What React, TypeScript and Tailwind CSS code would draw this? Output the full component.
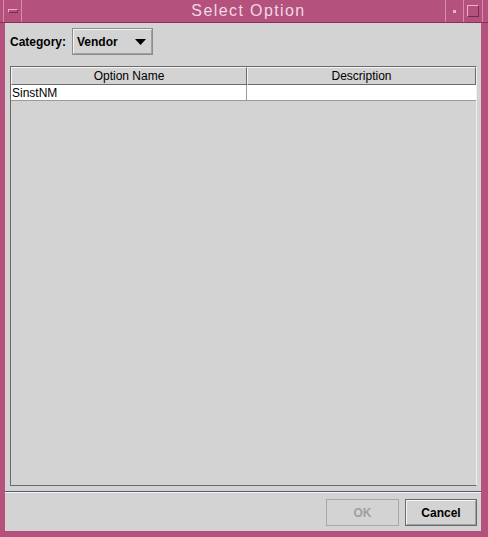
import React from "react";

export default function App() {
  const font = { fontFamily: '"Liberation Sans", Arial, sans-serif' };
  return (
    <div style={font} className="w-[488px] h-[537px] bg-[#b4517c] flex flex-col relative overflow-hidden">
      {/* title bar */}
      <div className="h-[23px] flex border-b border-[#8a3058]">
        <div className="w-[4px] border-r border-[#d98aab]" />
        <div className="w-[18px] flex items-center justify-center border-r border-[#d98aab]">
          <div className="w-[10px] h-[4px] border border-t-[#e6b3c8] border-l-[#e6b3c8] border-b-[#7a2a4c] border-r-[#7a2a4c]" />
        </div>
        <div className="flex-1 flex items-center justify-center pl-[30px] text-[16px] text-[#f0d8e4] tracking-[1.4px]">
          Select Option
        </div>
        <div className="w-[19px] flex items-center justify-center border-l border-[#d98aab] border-r border-r-[#d98aab]">
          <div className="w-[3px] h-[3px] bg-[#e6b3c8]" />
        </div>
        <div className="w-[18px] flex items-center justify-center">
          <div className="w-[12px] h-[12px] border border-t-[#e6b3c8] border-l-[#e6b3c8] border-b-[#7a2a4c] border-r-[#7a2a4c]" />
        </div>
        <div className="w-[6px] border-l border-[#d98aab]" />
      </div>

      <div className="flex-1 flex pl-[5px] pr-[7px] pb-[6px]">
        <div className="flex-1 bg-[#d3d3d3] flex flex-col">
          {/* category row */}
          <div className="flex items-center mt-[5px] ml-[5px] h-[27px]">
            <span className="text-[12px] font-bold text-black">Category:</span>
            <div className="ml-[6px] w-[81px] h-[27px] border border-[#8c8c8c] bg-[#d3d3d3] flex items-center">
              <div className="w-full h-full border border-t-[#f4f4f4] border-l-[#f4f4f4] border-b-[#a0a0a0] border-r-[#a0a0a0] flex items-center pl-[3px] pr-[4px]">
                <span className="text-[12px] font-bold text-black flex-1">Vendor</span>
                <svg width="11" height="6" viewBox="0 0 11 6" className="mr-[1px]">
                  <polygon points="0,0 11,0 5.5,6" fill="#000" />
                </svg>
              </div>
            </div>
          </div>

          {/* table */}
          <div className="mt-[11px] ml-[5px] mr-[4px] h-[420px] border border-t-[#6a6a6a] border-l-[#6a6a6a] border-b-[#6a6a6a] border-r-[#f0f0f0] bg-[#d3d3d3] flex flex-col">
            <div className="flex h-[18px]">
              <div className="w-[236px] border border-t-[#f4f4f4] border-l-[#f4f4f4] border-b-[#6a6a6a] border-r-[#6a6a6a] flex items-center justify-center text-[12px] text-black">
                Option Name
              </div>
              <div className="flex-1 border border-t-[#f4f4f4] border-l-[#f4f4f4] border-b-[#6a6a6a] border-r-[#6a6a6a] flex items-center justify-center text-[12px] text-black">
                Description
              </div>
            </div>
            <div className="flex h-[16px] bg-white">
              <div className="w-[236px] border-r border-b border-[#9a9a9a] flex items-center pl-[1px] text-[12px] text-black">
                SinstNM
              </div>
              <div className="flex-1 border-b border-[#9a9a9a]" />
            </div>
          </div>

          {/* separator */}
          <div className="mt-[5px] h-[2px] border-t border-[#5a5a7a] border-b border-b-[#f4f4f4]" />

          {/* buttons */}
          <div className="flex justify-end gap-[6px] mt-[6px] mr-[4px]">
            <div className="w-[73px] h-[27px] border border-[#a8a8a8] flex items-center justify-center text-[12px] font-bold text-[#a0a0a0]">
              OK
            </div>
            <div className="w-[72px] h-[27px] border border-[#6a6a6a] flex">
              <div className="flex-1 border border-t-[#f4f4f4] border-l-[#f4f4f4] border-b-[#a0a0a0] border-r-[#a0a0a0] flex items-center justify-center text-[12px] font-bold text-black">
                Cancel
              </div>
            </div>
          </div>
        </div>
      </div>
    </div>
  );
}
